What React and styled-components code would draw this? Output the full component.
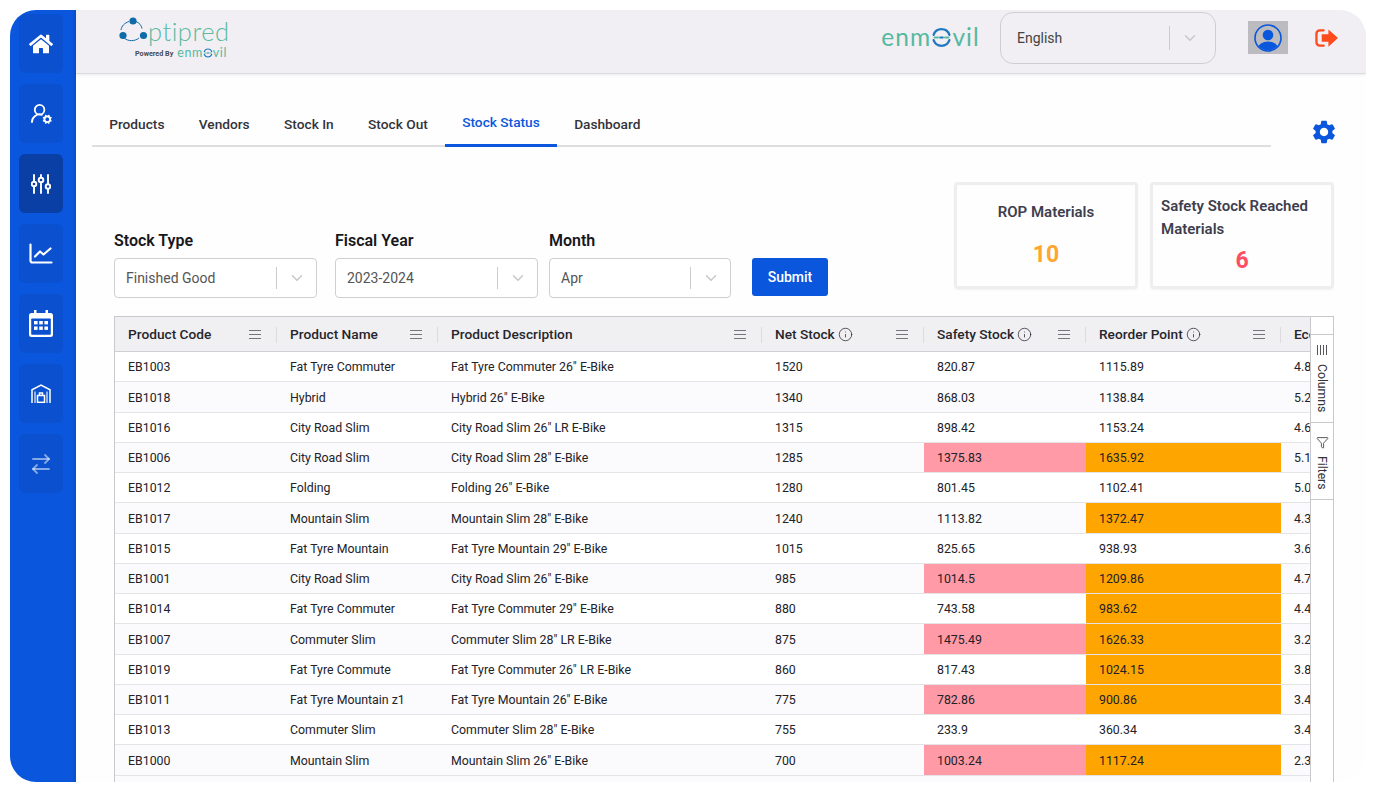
import styled, { createGlobalStyle } from "styled-components";
import { FaHome } from "react-icons/fa";
import { MdSettings } from "react-icons/md";
import { ArrowRightLeft, ChevronDown, Filter, Info, UserRoundCog } from "lucide-react";

const COLUMNS = "162px 161px 324px 162px 162px 195px 1fr";

const rows = [
  ["EB1003", "Fat Tyre Commuter", 'Fat Tyre Commuter 26" E-Bike', "1520", "820.87", "1115.89", "4.8", 0, 0],
  ["EB1018", "Hybrid", 'Hybrid 26" E-Bike', "1340", "868.03", "1138.84", "5.2", 0, 0],
  ["EB1016", "City Road Slim", 'City Road Slim 26" LR E-Bike', "1315", "898.42", "1153.24", "4.6", 0, 0],
  ["EB1006", "City Road Slim", 'City Road Slim 28" E-Bike', "1285", "1375.83", "1635.92", "5.1", 1, 1],
  ["EB1012", "Folding", 'Folding 26" E-Bike', "1280", "801.45", "1102.41", "5.0", 0, 0],
  ["EB1017", "Mountain Slim", 'Mountain Slim 28" E-Bike', "1240", "1113.82", "1372.47", "4.3", 0, 1],
  ["EB1015", "Fat Tyre Mountain", 'Fat Tyre Mountain 29" E-Bike', "1015", "825.65", "938.93", "3.6", 0, 0],
  ["EB1001", "City Road Slim", 'City Road Slim 26" E-Bike', "985", "1014.5", "1209.86", "4.7", 1, 1],
  ["EB1014", "Fat Tyre Commuter", 'Fat Tyre Commuter 29" E-Bike', "880", "743.58", "983.62", "4.4", 0, 1],
  ["EB1007", "Commuter Slim", 'Commuter Slim 28" LR E-Bike', "875", "1475.49", "1626.33", "3.2", 1, 1],
  ["EB1019", "Fat Tyre Commute", 'Fat Tyre Commuter 26" LR E-Bike', "860", "817.43", "1024.15", "3.8", 0, 1],
  ["EB1011", "Fat Tyre Mountain z1", 'Fat Tyre Mountain 26" E-Bike', "775", "782.86", "900.86", "3.4", 1, 1],
  ["EB1013", "Commuter Slim", 'Commuter Slim 28" E-Bike', "755", "233.9", "360.34", "3.4", 0, 0],
  ["EB1000", "Mountain Slim", 'Mountain Slim 26" E-Bike', "700", "1003.24", "1117.24", "2.3", 1, 1],
];

const GlobalStyle = createGlobalStyle`
  html, body {
    margin: 0;
    background: #ffffff;
    font-family: Roboto, "Liberation Sans", sans-serif;
  }
  * {
    box-sizing: border-box;
  }
`;

const Page = styled.div`
  width: 1376px;
  height: 792px;
  padding: 10px;
  overflow: hidden;
`;

const Frame = styled.div`
  display: flex;
  width: 1356px;
  height: 772px;
  border-radius: 26px;
  overflow: hidden;
  background: #fefefe;
`;

const Sidebar = styled.nav`
  display: flex;
  flex-direction: column;
  flex: none;
  gap: 11px;
  width: 66px;
  padding: 4px 0 0 9px;
  background: linear-gradient(90deg, #0a56dc 94%, #0a4fca 100%);
`;

const NavTile = styled.div`
  display: flex;
  align-items: center;
  justify-content: center;
  width: 44px;
  height: 59px;
  border-radius: 6px;
  color: ${(p) => (p.$muted ? "rgba(255,255,255,0.5)" : "#ffffff")};
  background: ${(p) => (p.$active ? "#0a3fa6" : "#0a50cf")};
`;

const Main = styled.main`
  flex: 1;
  min-width: 0;
  display: flex;
  flex-direction: column;
`;

const Header = styled.header`
  display: flex;
  flex: none;
  align-items: center;
  height: 64px;
  padding: 2px 28px 10px 42px;
  background: #f1eff3;
  border-bottom: 1px solid #dcdcde;
  box-shadow: 0 1px 3px rgba(0, 0, 0, 0.08);
`;

const Logo = styled.div`
  display: flex;
  flex-direction: column;
  margin-top: -2px;
`;

const LogoTop = styled.div`
  display: flex;
  align-items: flex-end;
  height: 32px;
`;

const LogoName = styled.span`
  font-family: Lato, sans-serif;
  font-size: 25.5px;
  font-weight: 300;
  line-height: 30px;
  letter-spacing: 0.5px;
  color: #58bb9f;
`;

const LogoSub = styled.div`
  display: flex;
  align-items: center;
  gap: 4px;
  margin: 1px 0 0 17px;
`;

const Powered = styled.span`
  font-size: 7.2px;
  font-weight: 700;
  color: #4a4a52;
`;

const Wordmark = styled.span`
  display: inline-flex;
  align-items: center;
  margin-left: ${(p) => (p.$push ? "auto" : "0")};
  font-family: Lato, sans-serif;
  font-size: ${(p) => p.$size}px;
  line-height: 1;
  letter-spacing: ${(p) => p.$size * 0.045}px;
  color: #55b9a0;
`;

const LangSelect = styled.div`
  display: flex;
  align-items: center;
  width: 216px;
  height: 52px;
  margin-left: 20px;
  padding: 0 16px;
  border: 1px solid #cfcdd2;
  border-radius: 13px;
  font-size: 14px;
  color: #444444;
`;

const SelectText = styled.span`
  flex: 1;
`;

const Separator = styled.span`
  width: 1px;
  height: ${(p) => p.$h}px;
  background: #cccccc;
`;

const Chevron = styled(ChevronDown)`
  flex: none;
  margin-left: ${(p) => p.$gap}px;
  color: #c8c8c8;
`;

const UserBox = styled.div`
  display: flex;
  align-items: center;
  justify-content: center;
  width: 40px;
  height: 33px;
  margin-left: 32px;
  background: #bcbbc0;
`;

const LogoutIcon = styled.svg`
  margin-left: 27px;
`;

const Content = styled.div`
  flex: 1;
  min-height: 0;
  padding: 0 32px 0 16px;
`;

const TabRow = styled.div`
  display: flex;
  align-items: flex-end;
  justify-content: space-between;
  height: 73px;
`;

const Tabs = styled.div`
  display: flex;
  width: 1179px;
  height: 37px;
  border-bottom: 2px solid #dedee0;
`;

const Tab = styled.div`
  height: 37px;
  padding: ${(p) => (p.$active ? "4px" : "6px")} 17.2px 0;
  border-bottom: ${(p) => (p.$active ? "3px solid #0a56dc" : "none")};
  font-size: 13.7px;
  font-weight: 500;
  color: ${(p) => (p.$active ? "#0a56dc" : "#33333a")};
`;

const Gear = styled(MdSettings)`
  margin: 0 -4px 1px 0;
  color: #0a56dc;
`;

const TopRow = styled.div`
  display: flex;
  justify-content: space-between;
  margin: 35px 0 18px 22px;
`;

const FilterRow = styled.div`
  display: flex;
  align-items: flex-start;
  padding-top: 51px;
`;

const Field = styled.div`
  width: ${(p) => p.$w}px;
  margin-right: ${(p) => p.$gap}px;
`;

const FieldLabel = styled.div`
  height: 25px;
  font-size: 16px;
  font-weight: 600;
  line-height: 16px;
  color: #17171c;
`;

const SelectBox = styled.div`
  display: flex;
  align-items: center;
  height: 40px;
  padding: 0 10px 0 11px;
  border: 1px solid #cfcfd2;
  border-radius: 4px;
  background: #ffffff;
  font-size: 14px;
  color: #555555;
`;

const SubmitButton = styled.button`
  width: 76px;
  height: 38px;
  margin-top: 25px;
  border: none;
  border-radius: 3px;
  background: #0a56dc;
  color: #ffffff;
  font-family: Roboto, sans-serif;
  font-size: 14px;
  font-weight: 500;
`;

const Cards = styled.div`
  display: flex;
  gap: 12px;
`;

const Card = styled.div`
  width: 184px;
  height: 107px;
  padding: ${(p) => (p.$wide ? "10px 8px 0" : "16px 8px 0")};
  border: 3px solid #eeeef1;
  border-radius: 4px;
  box-shadow: 0 1px 2px rgba(0, 0, 0, 0.05);
`;

const CardTitle = styled.div`
  font-size: 15px;
  font-weight: 600;
  line-height: 23px;
  text-align: ${(p) => (p.$wide ? "left" : "center")};
  color: #3e3e4e;
`;

const CardValue = styled.div`
  margin-top: ${(p) => (p.$wide ? "5px" : "16px")};
  font-size: 23px;
  font-weight: 700;
  line-height: 30px;
  text-align: center;
  color: ${(p) => p.$color};
`;

const Grid = styled.div`
  display: flex;
  width: 1220px;
  margin-left: 22px;
  height: 480px;
  border: 1px solid #c9c9cd;
  border-bottom: none;
  overflow: hidden;
`;

const GridBody = styled.div`
  width: 1196px;
  overflow: hidden;
`;

const HeadRow = styled.div`
  display: grid;
  grid-template-columns: ${COLUMNS};
  height: 35px;
  border-bottom: 1px solid #d0d0d4;
  background: #f0eff2;
`;

const HeadCell = styled.div`
  position: relative;
  display: flex;
  align-items: center;
  gap: 3px;
  padding: 0 16px 0 13px;
  white-space: nowrap;
  overflow: hidden;
  font-size: 13.7px;
  font-weight: 500;
  color: #26262c;
  &:not(:last-child)::after {
    content: "";
    position: absolute;
    top: 10px;
    right: 0;
    width: 1px;
    height: 16px;
    background: #dcdcdf;
  }
`;

const MenuLines = styled.span`
  flex: none;
  width: 12px;
  height: 9px;
  margin-left: auto;
  border-top: 1px solid #75757a;
  border-bottom: 1px solid #75757a;
  background: linear-gradient(#75757a, #75757a) center / 100% 1px no-repeat;
`;

const Row = styled.div`
  display: grid;
  grid-template-columns: ${COLUMNS};
  height: 30.25px;
  border-bottom: 1px solid #e4e4e7;
  background: ${(p) => (p.$odd ? "#fbfafc" : "#ffffff")};
`;

const TONES = { pink: "#ff9aa6", orange: "#ffa500" };

const Cell = styled.div`
  display: flex;
  align-items: center;
  padding: 1.5px 0 0 13px;
  white-space: nowrap;
  overflow: hidden;
  font-size: 12.35px;
  color: #222228;
  background: ${(p) => TONES[p.$tone] || "transparent"};
`;

const SidePanel = styled.div`
  flex: none;
  width: 23px;
  padding-top: 17px;
  border-left: 1px solid #c9c9cd;
  background: #ffffff;
`;

const SideButton = styled.div`
  display: flex;
  flex-direction: column;
  align-items: center;
  gap: ${(p) => p.$gap}px;
  height: ${(p) => p.$h}px;
  padding-top: ${(p) => p.$pad}px;
  border-top: 1px solid #c9c9cd;
  font-size: 12.2px;
  color: #33333a;
  &:last-child {
    border-bottom: 1px solid #c9c9cd;
  }
`;

const SideLabel = styled.span`
  writing-mode: vertical-rl;
`;

const ColumnsGlyph = styled.span`
  flex: none;
  width: 10px;
  height: 10px;
  background: repeating-linear-gradient(90deg, #55555c 0 1px, transparent 1px 3px);
`;

function EnmovilO({ size }) {
  return (
    <svg width={size} height={size} viewBox="0 0 24 24" fill="none" strokeLinecap="round">
      <path d="M3 9a9.500 9.500 0 0 1 18 0" stroke="#1f78c1" strokeWidth="2.600" />
      <path d="M3 15a9.500 9.500 0 0 0 18 0" stroke="#1f78c1" strokeWidth="2.600" />
      <path d="M4 12h4M16 12h4" stroke="#55b9a0" strokeWidth="2.200" />
      <path d="M10.500 12h3" stroke="#1f78c1" strokeWidth="2.200" />
    </svg>
  );
}

function LogoMark() {
  return (
    <svg width="30" height="30" viewBox="0 0 30 30" fill="none">
      <path d="M11 5.500C6.500 7 3.500 10 3 14" stroke="#0f6aa8" strokeWidth="1" />
      <path d="M18 5.500c3.500 1.500 5.500 4 6 7" stroke="#0f6aa8" strokeWidth="1" />
      <path d="M6 22c4 3.500 11 3.500 15 0" stroke="#0f6aa8" strokeWidth="1" />
      <circle cx="15" cy="5" r="3.600" fill="#0f6aa8" />
      <circle cx="5" cy="19.500" r="3.600" fill="#0f6aa8" />
      <circle cx="25.500" cy="19.500" r="3.600" fill="#0f6aa8" />
    </svg>
  );
}

function SlidersIcon() {
  return (
    <svg width="20" height="20" viewBox="0 0 20 20" fill="none" stroke="#fff" strokeWidth="1.900" strokeLinecap="round">
      <path d="M3 1v6.500M3 12.500V19M10 1v2.500M10 8.500V19M17 1v9M17 15v4" />
      <circle cx="3" cy="10" r="2.300" />
      <circle cx="10" cy="6" r="2.300" />
      <circle cx="17" cy="12.500" r="2.300" />
    </svg>
  );
}

function ChartIcon() {
  return (
    <svg width="24" height="21" viewBox="0 0 24 21" fill="none" stroke="#fff" strokeWidth="2.200" strokeLinecap="round" strokeLinejoin="round">
      <path d="M1.500 1.500v16a2 2 0 0 0 2 2h19" />
      <path d="M6 13.500l5-5 3.500 3L21.500 5.500" />
    </svg>
  );
}

function CalendarIcon() {
  return (
    <svg width="24" height="27" viewBox="0 0 24 27" fill="none">
      <path
        d="M5 0h2.500v3h9V0H19v3h2.500A2.500 2.500 0 0 1 24 5.500v19a2.500 2.500 0 0 1-2.500 2.500h-19A2.500 2.500 0 0 1 0 24.500v-19A2.500 2.500 0 0 1 2.500 3H5V0z"
        fill="#fff"
      />
      <rect x="2.200" y="8.500" width="19.600" height="16.300" rx="0.800" fill="#0a50cf" />
      {[5, 10.200, 15.400].map((x) =>
        [11, 16.500].map((y) => <rect key={x + "-" + y} x={x} y={y} width="3.600" height="3.400" fill="#fff" />)
      )}
    </svg>
  );
}

function WarehouseIcon() {
  return (
    <svg width="20" height="19" viewBox="0 0 20 19" fill="none" stroke="#fff" strokeWidth="1.500">
      <path d="M1 19V5.800L10 1l9 4.800V19" />
      <path d="M4 19V7.500M16 19V7.500" strokeWidth="1.100" />
      <rect x="6.500" y="11.500" width="7" height="6.800" />
      <path d="M8.500 11.500V9h3v2.500" />
    </svg>
  );
}

function UserIcon() {
  return (
    <svg width="28" height="28" viewBox="0 0 28 28">
      <defs>
        <clipPath id="avatar-clip">
          <circle cx="14" cy="14" r="12.400" />
        </clipPath>
      </defs>
      <circle cx="14" cy="11" r="5.300" fill="#0a56dc" />
      <ellipse cx="14" cy="24" rx="10" ry="6.500" fill="#0a56dc" clipPath="url(#avatar-clip)" />
      <circle cx="14" cy="14" r="13" fill="none" stroke="#0a56dc" strokeWidth="1.600" />
    </svg>
  );
}

function SelectField({ w, gap, label, value }) {
  return (
    <Field $w={w} $gap={gap}>
      <FieldLabel>{label}</FieldLabel>
      <SelectBox>
        <SelectText>{value}</SelectText>
        <Separator $h={22} />
        <Chevron $gap={11} size={18} strokeWidth={2} />
      </SelectBox>
    </Field>
  );
}

function HeaderCell({ title, info }) {
  return (
    <HeadCell>
      {title}
      {info && <Info size={15} strokeWidth={1.2} />}
      <MenuLines />
    </HeadCell>
  );
}

export default function App() {
  return (
    <Page>
      <GlobalStyle />
      <Frame>
        <Sidebar>
          <NavTile>
            <FaHome size={24} />
          </NavTile>
          <NavTile>
            <UserRoundCog size={23} strokeWidth={1.9} />
          </NavTile>
          <NavTile $active>
            <SlidersIcon />
          </NavTile>
          <NavTile>
            <ChartIcon />
          </NavTile>
          <NavTile>
            <CalendarIcon />
          </NavTile>
          <NavTile>
            <WarehouseIcon />
          </NavTile>
          <NavTile $muted>
            <ArrowRightLeft size={24} strokeWidth={1.8} />
          </NavTile>
        </Sidebar>
        <Main>
          <Header>
            <Logo>
              <LogoTop>
                <LogoMark />
                <LogoName>ptipred</LogoName>
              </LogoTop>
              <LogoSub>
                <Powered>Powered By</Powered>
                <Wordmark $size={12.5}>
                  enm
                  <EnmovilO size={10} />
                  vil
                </Wordmark>
              </LogoSub>
            </Logo>
            <Wordmark $size={24.5} $push>
              enm
              <EnmovilO size={21} />
              vil
            </Wordmark>
            <LangSelect>
              <SelectText>English</SelectText>
              <Separator $h={24} />
              <Chevron $gap={11} size={18} strokeWidth={2} />
            </LangSelect>
            <UserBox>
              <UserIcon />
            </UserBox>
            <LogoutIcon width="23" height="20" viewBox="0 0 24 20" fill="none">
              <path
                d="M9 2H5a3.500 3.500 0 0 0-3.500 3.500v9A3.500 3.500 0 0 0 5 18h4"
                stroke="#ff4a1c"
                strokeWidth="2.400"
                strokeLinecap="round"
              />
              <path d="M14 1l10 9-10 9v-5H7V6h7V1z" fill="#ff4a1c" />
            </LogoutIcon>
          </Header>
          <Content>
            <TabRow>
              <Tabs>
                <Tab>Products</Tab>
                <Tab>Vendors</Tab>
                <Tab>Stock In</Tab>
                <Tab>Stock Out</Tab>
                <Tab $active>Stock Status</Tab>
                <Tab>Dashboard</Tab>
              </Tabs>
              <Gear size={28} />
            </TabRow>
            <TopRow>
              <FilterRow>
                <SelectField w={203} gap={18} label="Stock Type" value="Finished Good" />
                <SelectField w={203} gap={11} label="Fiscal Year" value="2023-2024" />
                <SelectField w={182} gap={21} label="Month" value="Apr" />
                <SubmitButton>Submit</SubmitButton>
              </FilterRow>
              <Cards>
                <Card>
                  <CardTitle>ROP Materials</CardTitle>
                  <CardValue $color="#ffa630">10</CardValue>
                </Card>
                <Card $wide>
                  <CardTitle $wide>Safety Stock Reached Materials</CardTitle>
                  <CardValue $wide $color="#ff4d63">
                    6
                  </CardValue>
                </Card>
              </Cards>
            </TopRow>
            <Grid>
              <GridBody>
                <HeadRow>
                  <HeaderCell title="Product Code" />
                  <HeaderCell title="Product Name" />
                  <HeaderCell title="Product Description" />
                  <HeaderCell title="Net Stock" info />
                  <HeaderCell title="Safety Stock" info />
                  <HeaderCell title="Reorder Point" info />
                  <HeadCell>Economic Order Qty</HeadCell>
                </HeadRow>
                {rows.map((r, i) => (
                  <Row key={r[0]} $odd={i % 2 === 1}>
                    <Cell>{r[0]}</Cell>
                    <Cell>{r[1]}</Cell>
                    <Cell>{r[2]}</Cell>
                    <Cell>{r[3]}</Cell>
                    <Cell $tone={r[7] ? "pink" : undefined}>{r[4]}</Cell>
                    <Cell $tone={r[8] ? "orange" : undefined}>{r[5]}</Cell>
                    <Cell>{r[6]}</Cell>
                  </Row>
                ))}
                <Row $odd />
              </GridBody>
              <SidePanel>
                <SideButton $h={88} $pad={10} $gap={9}>
                  <ColumnsGlyph />
                  <SideLabel>Columns</SideLabel>
                </SideButton>
                <SideButton $h={78} $pad={13} $gap={7}>
                  <Filter size={13} strokeWidth={1.5} />
                  <SideLabel>Filters</SideLabel>
                </SideButton>
              </SidePanel>
            </Grid>
          </Content>
        </Main>
      </Frame>
    </Page>
  );
}
